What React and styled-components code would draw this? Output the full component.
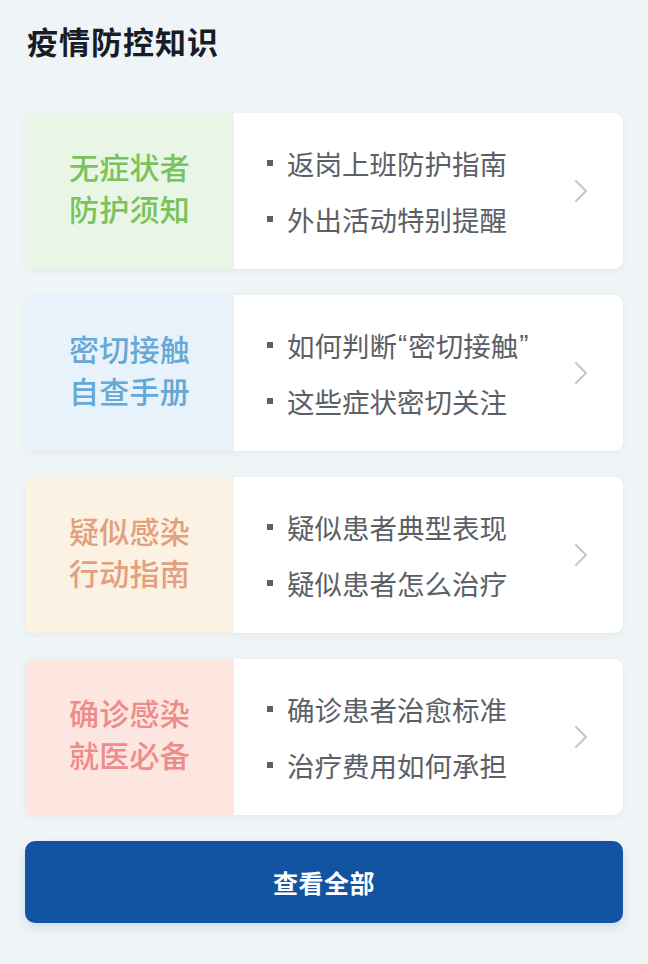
import React from 'react'
import styled, { createGlobalStyle } from 'styled-components'

const GlobalStyle = createGlobalStyle`
  html, body {
    margin: 0;
    padding: 0;
    background: #eff4f7;
  }
  body {
    font-family: "Noto Sans CJK SC", "Noto Sans", sans-serif;
  }
`

const Page = styled.div`
  width: 648px;
  min-height: 964px;
  box-sizing: border-box;
  padding: 18px 25px 0 25px;
  background: #eff4f7;
`

const Title = styled.h1`
  margin: 0 0 0 2px;
  font-size: 31px;
  line-height: 46px;
  font-weight: 700;
  color: #171c26;
  letter-spacing: 1px;
`

const List = styled.div`
  display: flex;
  flex-direction: column;
  gap: 26px;
  margin-top: 49px;
`

const Card = styled.div`
  display: flex;
  height: 156px;
  border-radius: 9px;
  overflow: hidden;
  background: #fff;
  box-shadow: 0 2px 6px rgba(40, 70, 110, 0.06);
  cursor: pointer;
`

const Label = styled.div`
  width: 209px;
  flex-shrink: 0;
  display: flex;
  flex-direction: column;
  align-items: center;
  justify-content: center;
  background: ${p => p.$bg};
  color: ${p => p.$color};
  font-size: 30px;
  font-weight: 500;
  line-height: 42px;
  letter-spacing: 0.3px;
  padding-bottom: 8px;
  box-sizing: border-box;
`

const Items = styled.div`
  flex: 1;
  display: flex;
  flex-direction: column;
  justify-content: center;
  padding-left: 33px;
`

const Item = styled.div`
  display: flex;
  align-items: center;
  font-size: 27.5px;
  line-height: 56px;
  color: #5c5f66;
  &::before {
    content: '';
    width: 6px;
    height: 6px;
    background: #5c5f66;
    margin-right: 14px;
    flex-shrink: 0;
  }
`

const Quote = styled.span`
  font-family: "Liberation Sans", sans-serif;
  margin: 0 1px;
`

const Arrow = styled.div`
  display: flex;
  align-items: center;
  padding-right: 35px;
`

const Button = styled.button`
  display: block;
  width: 100%;
  height: 82px;
  margin-top: 26px;
  border: none;
  border-radius: 10px;
  background: #1354a2;
  color: #fff;
  font-family: inherit;
  font-size: 25px;
  font-weight: 700;
  letter-spacing: 0.5px;
  box-shadow: 0 4px 10px rgba(19, 84, 162, 0.15);
  cursor: pointer;
`

const cards = [
  {
    title: ['无症状者', '防护须知'],
    bg: '#eaf6e5',
    color: '#78c35c',
    items: ['返岗上班防护指南', '外出活动特别提醒'],
  },
  {
    title: ['密切接触', '自查手册'],
    bg: '#e8f2fa',
    color: '#66a8d6',
    items: ['如何判断“密切接触”', '这些症状密切关注'],
  },
  {
    title: ['疑似感染', '行动指南'],
    bg: '#fcf2e4',
    color: '#e3a07e',
    items: ['疑似患者典型表现', '疑似患者怎么治疗'],
  },
  {
    title: ['确诊感染', '就医必备'],
    bg: '#fde6df',
    color: '#ed8c8a',
    items: ['确诊患者治愈标准', '治疗费用如何承担'],
  },
]

// quotes in the reference are the narrow latin kind
function renderText(text) {
  return text.split(/([“”])/).map((part, i) =>
    part === '“' || part === '”' ? <Quote key={i}>{part}</Quote> : part
  )
}

function Chevron() {
  return (
    <svg width="14" height="24" viewBox="0 0 14 24" fill="none">
      <path d="M2 2l10 10L2 22" stroke="#c6c7ca" strokeWidth="2.2" strokeLinecap="round" strokeLinejoin="round" />
    </svg>
  )
}

export default function App() {
  return (
    <>
      <GlobalStyle />
      <Page>
        <Title>疫情防控知识</Title>
        <List>
          {cards.map(c => (
            <Card key={c.title[0]}>
              <Label $bg={c.bg} $color={c.color}>
                <span>{c.title[0]}</span>
                <span>{c.title[1]}</span>
              </Label>
              <Items>
                {c.items.map(t => (
                  <Item key={t}>{renderText(t)}</Item>
                ))}
              </Items>
              <Arrow>
                <Chevron />
              </Arrow>
            </Card>
          ))}
        </List>
        <Button>查看全部</Button>
      </Page>
    </>
  )
}
